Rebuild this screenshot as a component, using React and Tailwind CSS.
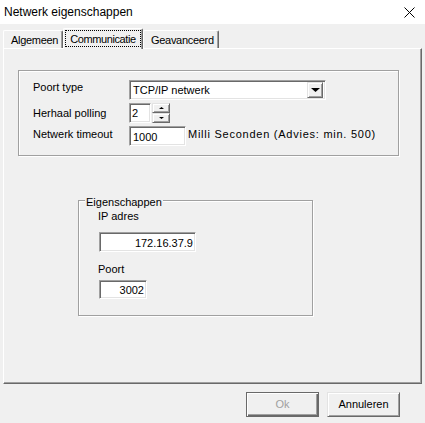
import React from "react";

const sunken =
  "bg-white border border-t-[#a0a0a0] border-l-[#a0a0a0] border-r-white border-b-white shadow-[inset_1px_1px_0_#696969,inset_-1px_-1px_0_#e3e3e3]";
const raised =
  "bg-[#f0f0f0] border border-t-[#e3e3e3] border-l-[#e3e3e3] border-r-[#696969] border-b-[#696969] shadow-[inset_1px_1px_0_#ffffff,inset_-1px_-1px_0_#a0a0a0]";
const etched =
  "border border-[#a0a0a0] shadow-[inset_1px_1px_0_#ffffff,1px_1px_0_#ffffff]";

const Tab = ({ label, active, width }) => {
  if (active) {
    return (
      <div
        className={`relative z-10 -mb-px h-[21px] bg-[#f0f0f0] border-l border-t border-r border-l-white border-t-white border-r-[#696969] shadow-[inset_-1px_0_0_#a0a0a0] rounded-t-[2px] p-[1px] ${width}`}
      >
        <div className="h-[17px] border border-dotted border-black flex justify-center pt-[2px] leading-[13px] tracking-[-0.4px]">
          {label}
        </div>
      </div>
    );
  }
  return (
    <div
      className={`h-[18px] bg-[#f0f0f0] border-l border-t border-r border-l-white border-t-white border-r-[#696969] shadow-[inset_-1px_0_0_#a0a0a0] rounded-t-[2px] flex items-start pt-[3px] pl-[7px] leading-[13px] tracking-[-0.3px] ${width}`}
    >
      {label}
    </div>
  );
};

const Arrow = ({ up, size = 4 }) => (
  <svg width={size * 2 + 1} height={size} viewBox={`0 0 ${size * 2 + 1} ${size}`}>
    {up ? (
      <polygon points={`${size + 0.5},0 ${size * 2 + 1},${size} 0,${size}`} fill="#000" />
    ) : (
      <polygon points={`0,0 ${size * 2 + 1},0 ${size + 0.5},${size}`} fill="#000" />
    )}
  </svg>
);

export default function App() {
  return (
    <div className="w-[425px] h-[423px] overflow-hidden bg-[#f0f0f0] flex flex-col font-['Liberation_Sans',Arial,sans-serif] text-[11px] leading-[13px] text-black">
      {/* Title bar */}
      <div className="h-[24px] shrink-0 bg-white flex items-center justify-between pl-[4px] pr-[10px]">
        <span className="text-[12px] leading-[14px]">Netwerk eigenschappen</span>
        <svg width="11" height="11" viewBox="0 0 11 11">
          <path d="M0.5 0.5 L10.5 10.5 M10.5 0.5 L0.5 10.5" stroke="#000" strokeWidth="1" />
        </svg>
      </div>

      {/* Tabs */}
      <div className="h-[24px] shrink-0 flex items-end pl-[3px]">
        <Tab label="Algemeen" width="w-[60px]" />
        <Tab label="Communicatie" active width="w-[80px]" />
        <Tab label="Geavanceerd" width="w-[76px]" />
      </div>

      {/* Tab panel */}
      <div className="ml-[3px] w-[419px] h-[336px] shrink-0 border border-l-white border-t-white border-r-[#696969] border-b-[#696969] shadow-[inset_-1px_-1px_0_#a0a0a0] pt-[21px]">
        {/* Connection settings */}
        <div className={`ml-[14px] w-[381px] h-[86px] ${etched} pt-[9px] pl-[14px] flex flex-col gap-[3px]`}>
          <div className="flex h-[20px]">
            <div className="w-[96px] pt-[1px]">Poort type</div>
            <div className={`w-[197px] h-[20px] ${sunken} flex items-center justify-between pl-[3px] pr-[2px]`}>
              <span>TCP/IP netwerk</span>
              <div className={`w-[16px] h-[16px] ${raised} flex items-center justify-center`}>
                <Arrow />
              </div>
            </div>
          </div>
          <div className="flex h-[20px]">
            <div className="w-[96px] pt-[4px]">Herhaal polling</div>
            <div className={`w-[22px] h-[20px] ${sunken} pl-[2px] pt-[3px]`}>2</div>
            <div className="ml-[1px] w-[18px] h-[20px] flex flex-col">
              <div className={`h-[10px] ${raised} flex items-center justify-center`}>
                <Arrow up size={2} />
              </div>
              <div className={`h-[10px] ${raised} flex items-center justify-center`}>
                <Arrow size={2} />
              </div>
            </div>
          </div>
          <div className="flex h-[20px]">
            <div className="w-[96px] pt-[2px]">Netwerk timeout</div>
            <div className={`w-[57px] h-[20px] ${sunken} pl-[3px] pt-[4px]`}>1000</div>
            <div className="ml-[2px] pt-[2px] tracking-[0.75px]">Milli Seconden (Advies: min. 500)</div>
          </div>
        </div>

        {/* Eigenschappen */}
        <div className={`relative ml-[74px] mt-[44px] w-[235px] h-[116px] ${etched} pt-[9px] pl-[19px]`}>
          <span className="absolute -top-[5px] left-[6px] bg-[#f0f0f0] px-[1px]">Eigenschappen</span>
          <div>IP adres</div>
          <div className={`ml-[1px] mt-[9px] w-[97px] h-[20px] ${sunken} text-right pr-[2px] pt-[4px]`}>
            172.16.37.9
          </div>
          <div className="mt-[11px]">Poort</div>
          <div className={`ml-[1px] mt-[4px] w-[48px] h-[19px] ${sunken} text-right pr-[2px] pt-[3px]`}>
            3002
          </div>
        </div>
      </div>

      {/* Buttons */}
      <div className="mt-[8px] flex justify-end gap-[8px] pr-[25px]">
        <button className="w-[73px] h-[25px] border border-[#696969] bg-[#f0f0f0] shadow-[inset_1px_1px_0_#ffffff,inset_-1px_-1px_0_#696969,inset_-2px_-2px_0_#a0a0a0] text-[#a0a0a0] text-[11px]">
          Ok
        </button>
        <button className={`w-[73px] h-[25px] ${raised} text-[11px]`}>Annuleren</button>
      </div>
    </div>
  );
}
